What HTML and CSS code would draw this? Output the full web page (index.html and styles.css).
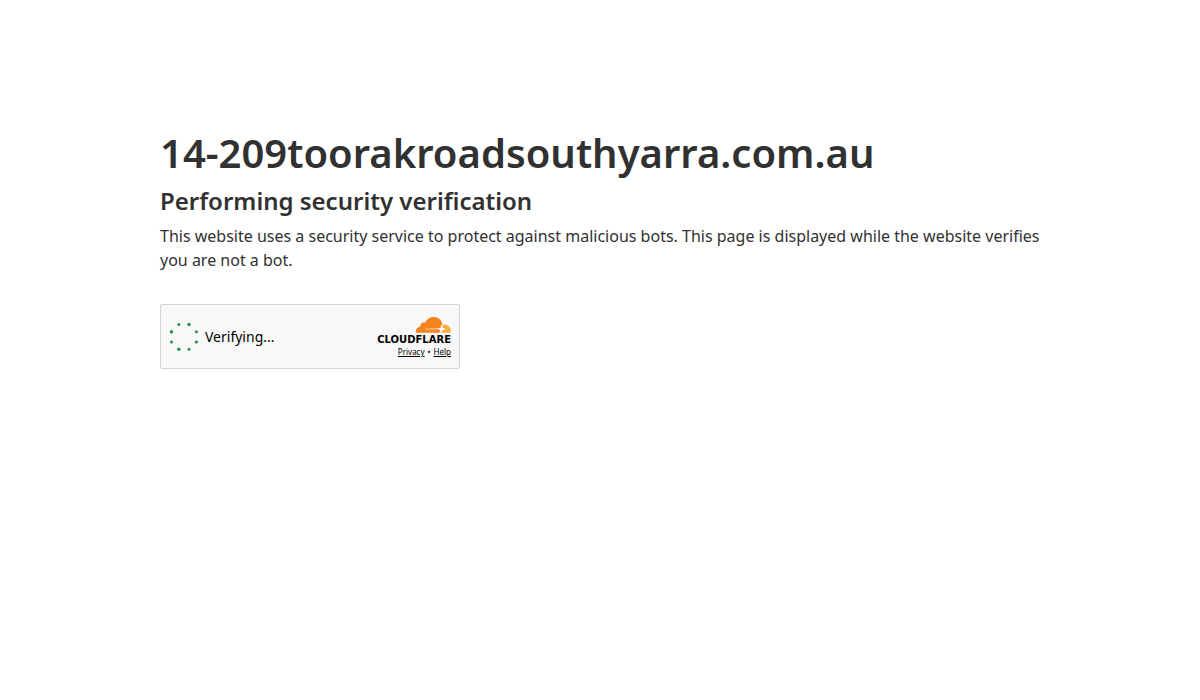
FILE: index.html
```html
<!DOCTYPE html>
<html lang="en">
  <head>
    <meta charset="UTF-8" />
    <meta name="viewport" content="width=device-width, initial-scale=1.0" />
    <title>Just a moment...</title>
    <link rel="stylesheet" href="styles.css">
  </head>

  <body>
    <main class="main-content">
      <h1>14-209toorakroadsouthyarra.com.au</h1>
      <h2>Performing security verification</h2>
      <p class="description">This website uses a security service to protect against malicious bots. This page is displayed while the website verifies you are not a bot.</p>

      <div class="widget">
        <div class="status" role="status">
          <svg class="spinner" viewBox="0 0 30 30" aria-hidden="true">
            <circle cx="9.8" cy="2.5" r="1.5" />
            <circle cx="20" cy="2.5" r="1.7" />
            <circle cx="27.4" cy="9.8" r="1.5" />
            <circle cx="27.4" cy="20" r="1.6" />
            <circle cx="20" cy="27.3" r="1.5" />
            <circle cx="9.8" cy="27.3" r="1.7" />
            <circle cx="2.5" cy="20" r="1.5" />
            <circle cx="2.5" cy="9.8" r="1.7" />
          </svg>
          <span>Verifying...</span>
        </div>

        <div class="branding">
          <svg class="cloud" viewBox="0 0 36 16" aria-hidden="true">
            <path fill="#f6821f" d="M1.1 15.7C0.3 12.6 2.2 9.9 5.4 9.7C4.9 6.8 7.6 4.6 10.1 5.8C11.7 1.9 15.2 0 19.1 0.1C23.2 0.2 26.4 3.1 27.4 7.2L24.8 15.7Z" />
            <path fill="#fbad41" d="M28.5 7.3C32.7 7.2 35.8 10.3 35.8 14C35.8 14.6 35.7 15.2 35.6 15.7H24.9L26.4 11Z" />
            <path fill="#fcd3ae" d="M10 11.8L24.1 11.2V12.6L10 12.6Z" />
            <path fill="#fff" d="M23 11.6L25.4 10.8L26.5 7.4L27.5 10.5L30.6 12.1L27.4 13.2L25.8 15.8H24.6L25 13Z" />
          </svg>
          <span class="wordmark">CLOUDFLARE</span>
          <div class="links">
            <a href="#privacy">Privacy</a>
            <span>•</span>
            <a href="#help">Help</a>
          </div>
        </div>
      </div>
    </main>
  </body>
</html>
```
FILE: styles.css
```css
* {
  box-sizing: border-box;
  margin: 0;
  padding: 0;
}

body {
  background: #fff;
  color: #313131;
  font-family: "Noto Sans", sans-serif;
}

.main-content {
  max-width: 960px;
  margin: 128px auto;
  padding: 0 40px;
}

h1 {
  margin-bottom: 8px;
  font-size: 40px;
  font-weight: 600;
  line-height: 50px;
  overflow-wrap: anywhere;
}

h2 {
  margin-bottom: 8px;
  font-size: 24px;
  font-weight: 600;
  line-height: 30px;
}

.description {
  margin-bottom: 32px;
  font-size: 16px;
  line-height: 24px;
}

.widget {
  display: flex;
  align-items: center;
  justify-content: space-between;
  max-width: 300px;
  min-height: 65px;
  padding: 0 8px;
  border: 1px solid #d6d6d6;
  border-radius: 2px;
  background: #f8f8f8;
  color: #000;
}

.status {
  display: flex;
  align-items: center;
  gap: 6px;
  font-size: 14px;
  line-height: 20px;
}

.spinner {
  width: 30px;
  height: 30px;
  fill: #1f9150;
}

.branding {
  display: flex;
  flex-direction: column;
  align-items: flex-end;
  padding-top: 1px;
}

.cloud {
  width: 36px;
  height: 16px;
}

.wordmark {
  font-family: "DejaVu Sans", sans-serif;
  font-size: 10px;
  font-weight: 700;
  line-height: 14px;
}

.links {
  display: flex;
  gap: 3px;
  font-size: 8px;
  line-height: 10px;
}

.links a {
  color: inherit;
  text-underline-offset: 1px;
}
```
